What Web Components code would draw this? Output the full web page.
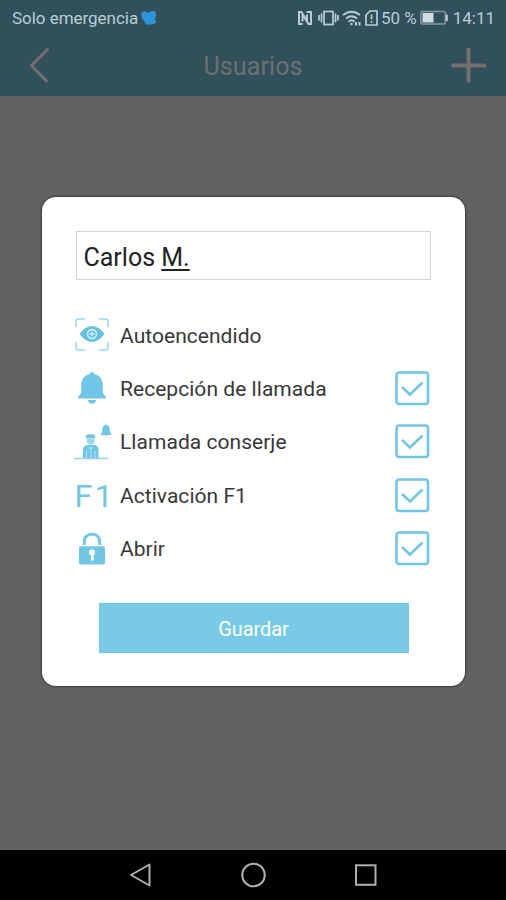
<!DOCTYPE html>
<html lang="es">
<head>
<meta charset="utf-8">
<title>Usuarios</title>
<style>
  html, body { margin: 0; height: 100%; }
  body { font-family: Roboto, "Liberation Sans", sans-serif; background: #626262; overflow: hidden; }
</style>
</head>
<body>
<app-screen>
  <status-bar slot="top" carrier="Solo emergencia" battery="50 %" clock="14:11"></status-bar>
  <title-bar slot="top">Usuarios</title-bar>
  <user-dialog>
    <name-field slot="name">Carlos <u>M.</u></name-field>
    <permission-row icon="eye">Autoencendido</permission-row>
    <permission-row icon="bell" checkable>Recepción de llamada</permission-row>
    <permission-row icon="desk" checkable>Llamada conserje</permission-row>
    <permission-row icon="f1" checkable>Activación F1</permission-row>
    <permission-row icon="lock" checkable>Abrir</permission-row>
    <save-button slot="action">Guardar</save-button>
  </user-dialog>
  <nav-bar slot="bottom"></nav-bar>
</app-screen>
<script>
  function define(name, render) {
    customElements.define(name, class extends HTMLElement {
      connectedCallback() {
        if (this.shadowRoot) return;
        this.attachShadow({ mode: 'open' }).innerHTML = render(this);
      }
    });
  }

  const icons = {
    eye: `<svg width="36" height="36" viewBox="0 0 36 36" fill="none" stroke="#9ad7ee" stroke-width="1.5">
      <path d="M2 10V4.500Q2 2 4.500 2H11M25 2H31.500Q34 2 34 4.500V10M34 25V30.500Q34 33 31.500 33H25M11 33H4.500Q2 33 2 30.500V25"/>
      <path d="M5.500 17Q11.500 9 18 9T30.500 17Q24.500 25 18 25T5.500 17Z" fill="#65c0e2" stroke="none"/>
      <circle cx="18" cy="17" r="4.500" stroke="#d6f0fa" stroke-width="1.500"/>
      <path d="M18 14.500V19.500M15.500 17H20.500" stroke="#d6f0fa" stroke-width="1.300"/></svg>`,
    bell: `<svg width="36" height="36" viewBox="0 0 36 36" fill="#70c6e6">
      <path d="M18 2C19.500 2 20.500 3 20.500 4.300C26 5.400 28.800 9.500 28.800 15V21.500C28.800 23.800 30 25 32 27V28.500H4V27C6 25 7.200 23.800 7.200 21.500V15C7.200 9.500 10 5.400 15.500 4.300C15.500 3 16.500 2 18 2Z"/>
      <path d="M14 30H22Q21.500 33.800 18 33.800T14 30Z"/></svg>`,
    desk: `<svg width="38" height="36" viewBox="0 0 38 36" fill="#70c6e6">
      <path d="M32 .5C34.500 1 35.800 3.300 35.800 6C35.800 8.300 36 8.700 37.300 10.200V11.100H26.700V10.200C28 8.700 28.200 8.300 28.200 6C28.200 3.300 29.500 1 32 .5Z"/><path d="M30.500 11.600H33.500L32 12.800Z"/>
      <path d="M11.500 11.500Q16.500 8.900 21.500 11.500L20.800 14.500H12.300Z"/>
      <path d="M12.800 15H20.500V17Q20.500 20.500 16.700 20.500T12.800 17Z" fill="#9bd7ed"/>
      <path d="M13 21H20.500Q24.500 21.500 24.500 25.500V35H9V25.500Q9 21.500 13 21Z"/>
      <path d="M12.500 27V34.500M21 27V34.500M16.800 23V34M14.500 24H19" stroke="#b9e4f3" stroke-width="1"/>
      <path d="M0 34.500H34" stroke="#8fd2eb" stroke-width="1.500"/></svg>`,
    f1: `<span class="glyph">F1</span>`,
    lock: `<svg width="36" height="36" viewBox="0 0 36 36">
      <path d="M10.300 14V10.500C10.300 5.500 13.700 3.300 18 3.300S25.700 5.500 25.700 10.500V14" fill="none" stroke="#70c6e6" stroke-width="3"/>
      <rect x="5" y="15.300" width="26" height="18.200" rx="1.800" fill="#70c6e6"/>
      <circle cx="18" cy="21.500" r="3" fill="#fff"/><path d="M17 22H19.700V29.700H17Z" fill="#fff"/></svg>`
  };

  define('app-screen', () => `
    <style>
      :host { display: flex; flex-direction: column; height: 900px; width: 506px; background: #626262; }
      header { background: #30505c; height: 96px; flex: none; }
      main { flex: 1; display: flex; justify-content: center; align-items: flex-start; padding-top: 101px; }
    </style>
    <header><slot name="top"></slot></header><main><slot></slot></main><slot name="bottom"></slot>`);

  define('status-bar', el => `
    <style>
      :host { display: flex; align-items: center; height: 36px; padding: 0 11px 0 12px; color: #b9cdd4; font-size: 17px; line-height: 36px; box-sizing: border-box; }
      svg { display: block; flex: none; }
      .carrier { letter-spacing: -0.03px; width: 126px; white-space: nowrap; }
      .heart { margin-left: 3px; }
      .right { margin-left: auto; display: flex; align-items: center; gap: 3px; }
      .pct { width: 36px; white-space: nowrap; font-size: 17px; }
      .clock { width: 43px; text-align: right; white-space: nowrap; }
    </style>
    <span class="carrier">${el.getAttribute('carrier')}</span>
    <svg class="heart" width="16" height="16" viewBox="0 0 16 16"><path d="M5 14.500L3 11Q-.5 7 .5 3Q2 0 6 2Q8 3 8.500 2Q12 0 14.500 2Q16 6 13.500 9.500L15.500 12Q14 15 5 14.500Z" fill="#2b94da"/></svg>
    <div class="right">
      <svg width="18" height="16" viewBox="0 0 18 16" fill="none" stroke="#b9cdd4"><path d="M5.500 14H2V2H4.500L10 11V4.500M9.500 2H14V14H11.500L5.500 4.500V11.500" stroke-width="2"/></svg>
      <svg width="21" height="16" viewBox="0 0 21 16" fill="none" stroke="#b9cdd4" stroke-width="1.700"><rect x="6" y="1.500" width="9" height="13"/><path d="M3.500 3.500V12.500M17.500 3.500V12.500M1 5V10.500M20 5V10.500"/></svg>
      <svg width="20" height="16" viewBox="0 0 20 16" fill="none" stroke="#b9cdd4" stroke-width="1.900"><path d="M1 5Q9.500-1.500 18 5M4 8.500Q9.500 4 15 8.500M6.500 11.700Q9.500 9 12.500 11.700"/><circle cx="9.500" cy="14" r="1.200" fill="#b9cdd4" stroke="none"/><path d="M14 15.500V12M17.500 12V15.500" stroke-width="2"/></svg>
      <svg width="13" height="16" viewBox="0 0 13 16" fill="none" stroke="#b9cdd4" stroke-width="1.700"><path d="M1 5L5 1H12V15H1ZM6.500 4.500V9.500M6.500 11V12.800"/></svg>
      <span class="pct">${el.getAttribute('battery')}</span>
      <svg width="29" height="16" viewBox="0 0 29 16"><rect x=".8" y="1.500" width="24.500" height="12.500" rx="1.500" fill="none" stroke="#8199a2" stroke-width="1.500"/><rect x="2.500" y="3" width="11" height="9.500" fill="#d0dce0"/><path d="M26.800 4.500V11" stroke="#b9cdd4" stroke-width="2"/></svg>
      <span class="clock">${el.getAttribute('clock')}</span>
    </div>`);

  define('title-bar', () => `
    <style>
      :host { display: grid; grid-template-columns: 60px 1fr 60px; align-items: center; height: 60px; color: #6e7072; font-size: 25px; text-align: center; }
      svg { display: block; }
      .title { letter-spacing: 0.1px; }
    </style>
    <svg width="60" height="60" viewBox="0 0 60 60" fill="none" stroke="#756e6d" stroke-width="3"><path d="M48.500 12.500L31.500 29.500L47.500 46"/></svg>
    <span class="title"><slot></slot></span>
    <svg width="60" height="60" viewBox="0 0 60 60" fill="none" stroke="#756e6d" stroke-width="4"><path d="M22.500 12V46.500M5.500 29.500H40"/></svg>`);

  define('user-dialog', () => `
    <style>
      :host { display: flex; flex-direction: column; box-sizing: border-box; width: 423px; height: 489px; padding: 34px 34px 33px 34px; background: #fff; border-radius: 14px; box-shadow: 0 0 2px 1px #3c3c3c; }
      .rows { display: flex; flex-direction: column; margin-top: 28.4px; }
      .action { margin: auto 23px 0; }
    </style>
    <slot name="name"></slot><div class="rows"><slot></slot></div><div class="action"><slot name="action"></slot></div>`);

  define('name-field', () => `
    <style>
      :host { display: block; box-sizing: border-box; height: 49px; width: 355px; border: 1.5px solid #d2d2d2; padding-left: 7px; font-size: 25px; line-height: 51px; color: #222; }
      ::slotted(u) { text-decoration-thickness: 1.5px; text-underline-offset: 2.5px; }
    </style><slot></slot>`);

  define('permission-row', el => `
    <style>
      :host { display: grid; grid-template-columns: 44.5px 1fr 35.5px; align-items: center; height: 53.4px; color: #383838; font-size: 21px; letter-spacing: 0.04px; }
      svg { display: block; }
      .icon { margin-left: -2px; }
      .label { padding-top: 1px; }
      .glyph { display: block; height: 36px; line-height: 38px; font-size: 32px; letter-spacing: 2.5px; padding-left: 1px; color: #70c6e6; white-space: nowrap; }
    </style>
    <span class="icon">${icons[el.getAttribute('icon')]}</span>
    <span class="label"><slot></slot></span>
    ${el.hasAttribute('checkable') ? '<check-box></check-box>' : ''}`);

  define('check-box', () => `
    <style>:host { display: block; } svg { display: block; }</style>
    <svg width="35" height="35" viewBox="0 0 35 35" fill="none" stroke="#70c6e6"><rect x="1.500" y="1.500" width="31.500" height="31.500" rx="2.500" stroke-width="2.600"/><path d="M7 16L15 23.500L27.500 11.500" stroke-width="2.600"/></svg>`);

  define('save-button', () => `
    <style>:host { display: block; height: 50px; width: 310px; background: #78cae7; color: #fff; font-size: 20px; line-height: 52px; text-align: center; letter-spacing: -0.1px; }</style><slot></slot>`);

  define('nav-bar', () => `
    <style>
      :host { display: flex; justify-content: center; align-items: center; gap: 88px; height: 50px; flex: none; background: #000; }
      svg { display: block; }
    </style>
    <svg width="24" height="26" viewBox="0 0 24 26" fill="none" stroke="#b0b0b0" stroke-width="2"><path d="M21.500 2.500V23.500L3 13Z" stroke-linejoin="round"/></svg>
    <svg width="26" height="26" viewBox="0 0 26 26" fill="none" stroke="#b0b0b0" stroke-width="2"><circle cx="13.500" cy="13" r="11.300"/></svg>
    <svg width="24" height="26" viewBox="0 0 24 26" fill="none" stroke="#b0b0b0" stroke-width="2"><rect x="2" y="3.300" width="19.500" height="19.500"/></svg>`);
</script>
</body>
</html>
